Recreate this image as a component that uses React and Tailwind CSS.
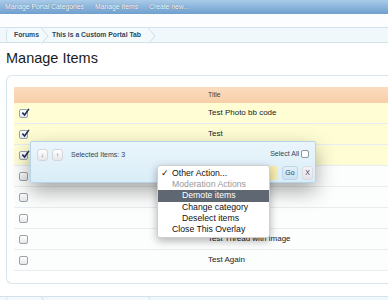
import React from 'react';

const rows = [
  { title: 'Test Photo bb code', checked: true },
  { title: 'Test', checked: true },
  { title: '', checked: true },
  { title: '', checked: false },
  { title: '', checked: false },
  { title: '', checked: false },
  { title: 'Test Thread with image', checked: false },
  { title: 'Test Again', checked: false },
];

function Check({ checked }) {
  return (
    <span className="relative inline-block w-[9px] h-[9px] rounded-[2px] border border-[#9aa3a8] bg-gradient-to-b from-white to-[#e4e7ea]">
      {checked && (
        <svg viewBox="0 0 10 10" className="absolute -top-[2px] left-[1px] w-[9px] h-[9px]">
          <path d="M1.5 5.2 L4 7.8 L8.8 1" fill="none" stroke="#1f2f5a" strokeWidth="1.8" />
        </svg>
      )}
    </span>
  );
}

function Arrow() {
  return (
    <svg viewBox="0 0 8 16" className="h-[16px] w-[8px] -ml-[1px]">
      <path d="M0 0 L7 8 L0 16" fill="#f4f9fc" stroke="#c6d8e3" strokeWidth="0.8" />
    </svg>
  );
}

function Crumbs({ labels }) {
  return (
    <div className="flex h-[16px] border-y border-[#d3e2ea] bg-[#f1f8fb] text-[6.8px] font-bold text-[#2b485c]">
      <div className="ml-[6px] flex w-[36px] items-center rounded-l-[4px] border-l border-[#d3e2ea] bg-[#f4f9fc] pl-[7px]">{labels ? 'Forums' : ''}</div>
      <Arrow />
      <div className="flex w-[100px] items-center bg-[#f4f9fc] pl-[3px]">{labels ? 'This is a Custom Portal Tab' : ''}</div>
      <Arrow />
    </div>
  );
}

export default function App() {
  return (
    <div className="relative h-[300px] w-[388px] overflow-hidden bg-white font-['Liberation_Sans',Arial,sans-serif]">
      {/* top nav */}
      <div className="flex h-[14px] items-center bg-gradient-to-b from-[#a9cbe8] to-[#6e9fce] pl-[5px] text-[6.8px] text-white [text-shadow:0_0_1px_rgba(40,70,110,0.8)]">
        <span className="w-[90px]">Manage Portal Categories</span>
        <span className="w-[54px]">Manage Items</span>
        <span>Create new...</span>
      </div>
      <div className="h-[13px] bg-[#fbfdfe]" />

      <Crumbs labels />

      <h1 className="ml-[6px] mt-[6px] text-[14.5px] leading-[18px] text-[#1a1a1a]">Manage Items</h1>

      {/* main block */}
      <div className="ml-[6px] mt-[8px] h-[209px] rounded-l-[6px] border-y border-l border-[#d7e6ec] pl-[7px] pt-[11px]">
        <div className="flex h-[16px] items-center bg-gradient-to-b from-[#fbdcbf] to-[#f7cfa8] text-[6.8px] text-[#5c3a1e]">
          <span className="ml-[194px]">Title</span>
        </div>
        {rows.map((r, i) => (
          <div
            key={i}
            className={`flex h-[21px] items-center border-b border-[#e6eef1] text-[8px] text-[#222] ${r.checked ? 'bg-[#fefdd4]' : 'bg-[#fcfdfd]'}`}
          >
            <span className="ml-[5px] flex"><Check checked={r.checked} /></span>
            <span className="ml-[180px]">{r.title}</span>
          </div>
        ))}
      </div>

      <div className="mt-[12px]">
        <Crumbs />
      </div>

      {/* inline moderation overlay */}
      <div className="absolute left-[30px] top-[141px] h-[42px] w-[286px] rounded-[2px] border border-[#b7d3e6] bg-gradient-to-b from-[#eaf5fb] to-[#d9edf8] shadow-[0_8px_20px_rgba(0,0,0,0.35)]">
        <div className="absolute left-[6px] top-[7px] flex gap-[4px]">
          <span className="flex h-[12px] w-[11px] items-center justify-center rounded-[3px] border border-[#d2d6d9] bg-gradient-to-b from-white to-[#e5e8eb] text-[6px] text-[#666]">↓</span>
          <span className="flex h-[12px] w-[11px] items-center justify-center rounded-[3px] border border-[#d2d6d9] bg-gradient-to-b from-white to-[#e5e8eb] text-[6px] text-[#666]">↑</span>
        </div>
        <span className="absolute left-[40px] top-[8px] text-[7px] text-[#2b485c]">Selected Items: 3</span>
        <div className="absolute right-[6px] top-[7px] flex items-center gap-[2px] text-[7px] text-[#2b485c]">
          <span>Select All</span>
          <span className="inline-block h-[8px] w-[8px] rounded-[2px] border border-[#8c969c] bg-white" />
        </div>
        <div className="absolute right-[2px] top-[24px] flex items-center gap-[4px]">
          <span className="h-[14px] w-[8px] rounded-r-[2px] bg-[#f6ecb0]" />
          <span className="flex h-[14px] w-[16px] items-center justify-center rounded-[3px] border border-[#bdd5e4] bg-gradient-to-b from-[#e3f0f8] to-[#c9e2f1] text-[7px] text-[#2b485c]">Go</span>
          <span className="flex h-[14px] w-[11px] items-center justify-center rounded-[3px] border border-[#dcdde0] bg-gradient-to-b from-[#f5f3f7] to-[#e6e2ea] text-[7px] text-[#2b485c]">X</span>
        </div>
      </div>

      {/* select dropdown */}
      <div className="absolute left-[157px] top-[165px] w-[113px] rounded-[3px] border border-[#d0d0d0] bg-white py-[2px] text-[8.7px] leading-[11.2px] text-[#111] shadow-[0_3px_8px_rgba(0,0,0,0.3)]">
        <div className="flex pl-[3px]"><span className="w-[11px]">✓</span>Other Action...</div>
        <div className="pl-[14px] text-[#999]">Moderation Actions</div>
        <div className="bg-[#5f6772] pl-[24px] text-white">Demote items</div>
        <div className="pl-[24px]">Change category</div>
        <div className="pl-[24px]">Deselect items</div>
        <div className="pl-[14px]">Close This Overlay</div>
      </div>
    </div>
  );
}
